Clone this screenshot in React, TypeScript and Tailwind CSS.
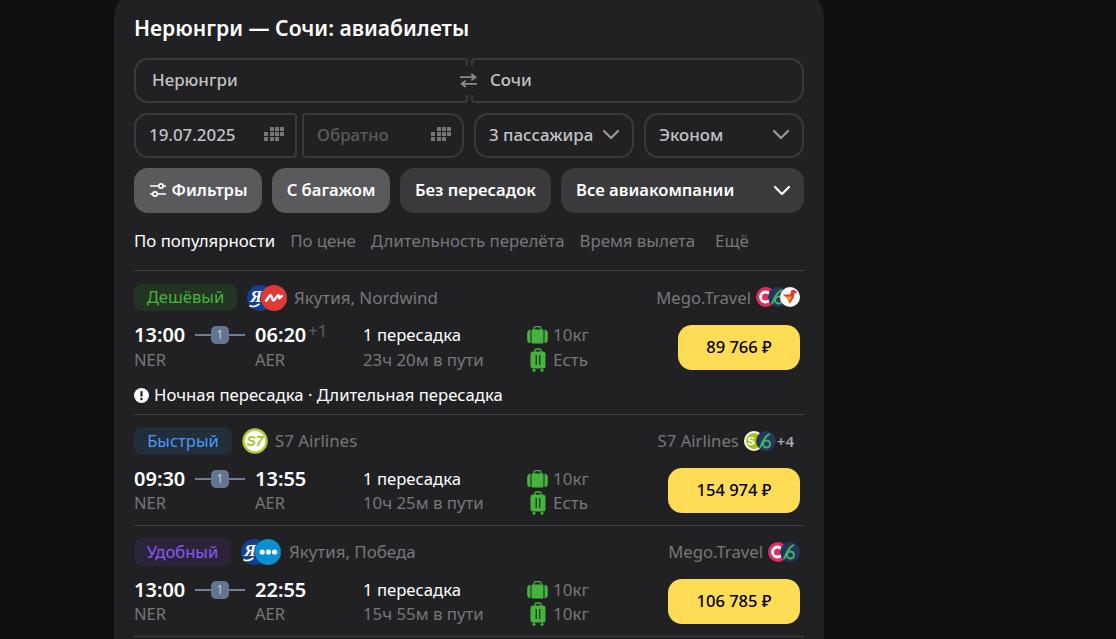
import React from "react";

const font = { fontFamily: '"Noto Sans", Roboto, sans-serif' };

function CalendarIcon() {
  const cells = [
    [6, 0], [11, 0], [16, 0],
    [0, 5], [6, 5], [11, 5], [16, 5],
    [0, 10], [6, 10], [11, 10],
  ];
  return (
    <svg width="20" height="15" viewBox="0 0 20 15" className="shrink-0" fill="#77777a">
      {cells.map(([x, y]) => (
        <rect key={`${x}-${y}`} x={x} y={y} width="4" height="4" rx="0.5" />
      ))}
    </svg>
  );
}

function Chevron({ color = "#9a9a9d" }: { color?: string }) {
  return (
    <svg width="18" height="11" viewBox="0 0 18 11" fill="none" className="shrink-0">
      <path d="M2 2l7 7 7-7" stroke={color} strokeWidth="2.2" strokeLinecap="round" strokeLinejoin="round" />
    </svg>
  );
}

function SwapIcon() {
  return (
    <svg width="17" height="15" viewBox="0 0 17 15" fill="none" stroke="#8b8b8e" strokeWidth="1.8">
      <path d="M0 4.2h15M11.2 1L15.4 4.2 11.2 7.4" />
      <path d="M17 10.8H2M5.8 7.6L1.6 10.8 5.8 14" />
    </svg>
  );
}

function SlidersIcon() {
  return (
    <svg width="18" height="16" viewBox="0 0 18 16" fill="none" stroke="#fff" strokeWidth="1.7" className="shrink-0">
      <path d="M1 4h9M14 4h3M1 12h3M8 12h9" />
      <circle cx="12" cy="4" r="2.2" />
      <circle cx="6" cy="12" r="2.2" />
    </svg>
  );
}

function BagIcon() {
  return (
    <svg width="21" height="18" viewBox="0 0 21 18" className="shrink-0">
      <path d="M7 4V2.5C7 1.4 7.9.7 9 .7h3c1.1 0 2 .7 2 1.8V4" fill="none" stroke="#46b33f" strokeWidth="1.3" />
      <rect x="4.5" y="3.5" width="12" height="14" rx="1" fill="#46b33f" />
      <path d="M3.5 3.7v13.6C1.5 17.2.2 16 .2 14V7C.2 5 1.5 3.8 3.5 3.7zM17.5 3.7v13.6c2-.1 3.3-1.3 3.3-3.3V7c0-2-1.3-3.2-3.3-3.3z" fill="#46b33f" />
    </svg>
  );
}

function CarryIcon() {
  return (
    <svg width="16" height="24" viewBox="0 0 16 24" className="shrink-0">
      <path d="M5 4V2.2C5 1.4 5.6 1 6.3 1h3.4c.7 0 1.3.4 1.3 1.2V4" fill="none" stroke="#46b33f" strokeWidth="1.3" />
      <rect x="0.5" y="3.5" width="15" height="17" rx="2.5" fill="#46b33f" />
      <path d="M6.2 7v10M9.8 7v10" stroke="#1f2a1d" strokeWidth="1.2" />
      <circle cx="4" cy="22.3" r="1.5" fill="#46b33f" />
      <circle cx="12" cy="22.3" r="1.5" fill="#46b33f" />
    </svg>
  );
}

function LogoCircle({ className = "", children, bg }: { className?: string; children?: React.ReactNode; bg: string }) {
  return (
    <svg width="26" height="26" viewBox="0 0 26 26" className={className}>
      <circle cx="13" cy="13" r="13" fill={bg} />
      {children}
    </svg>
  );
}

function YakutiaLogo() {
  return (
    <LogoCircle bg="#16408f">
      <text x="9" y="17" fill="#fff" fontSize="17" fontStyle="italic" fontWeight="700" textAnchor="middle" fontFamily="Liberation Serif, serif">Я</text>
      <path d="M2.5 20.5c3 2 7 .6 10-1.5" stroke="#fff" strokeWidth="1.6" fill="none" />
    </LogoCircle>
  );
}

function NordwindLogo() {
  return (
    <LogoCircle bg="#e03a37" className="-ml-[12px]">
      <path d="M4.5 16.5L8.5 11c1-1.2 1.6-.8 2 .4l1 3c.4 1.2 1.2 1.4 2 .4l3-4c.6-.8 1.2-.6 1.4.4l.4 2.2 3.2-3" stroke="#fff" strokeWidth="2.4" fill="none" strokeLinejoin="round" />
    </LogoCircle>
  );
}

function PobedaLogo() {
  return (
    <LogoCircle bg="#0a8fd0" className="-ml-[12px]">
      <circle cx="7.2" cy="13" r="2.6" fill="#fff" />
      <circle cx="13.4" cy="13" r="2.6" fill="#fff" />
      <circle cx="19.6" cy="13" r="2.6" fill="#fff" />
    </LogoCircle>
  );
}

function S7Logo() {
  return (
    <svg width="26" height="26" viewBox="0 0 26 26">
      <circle cx="13" cy="13" r="11.5" fill="#fff" stroke="#b5cc3a" strokeWidth="2.4" />
      <text x="13" y="18" fill="#a8c22c" fontSize="14" fontWeight="700" fontStyle="italic" textAnchor="middle" fontFamily="Liberation Sans, sans-serif">S7</text>
    </svg>
  );
}

function SmallLogo({ kind, first }: { kind: "mego" | "six" | "bird" | "s7"; first?: boolean }) {
  const cls = first ? "" : "-ml-[8px]";
  if (kind === "mego")
    return (
      <svg width="20" height="20" viewBox="0 0 20 20" className={cls}>
        <circle cx="10" cy="10" r="10" fill="#e22d64" />
        <circle cx="9.5" cy="10" r="5" fill="none" stroke="#fff" strokeWidth="2.8" />
      </svg>
    );
  if (kind === "six")
    return (
      <svg width="20" height="20" viewBox="0 0 20 20" className={cls}>
        <circle cx="10" cy="10" r="10" fill="#25365a" />
        <path d="M4 17C7 9 10 4 14 3M7 13a3.5 3.5 0 1 0 7 0 3.5 3.5 0 1 0-7 0" fill="none" stroke="#3fb36a" strokeWidth="2" />
      </svg>
    );
  if (kind === "bird")
    return (
      <svg width="20" height="20" viewBox="0 0 20 20" className={cls}>
        <circle cx="10" cy="10" r="10" fill="#fff" />
        <path d="M2.5 7.5h7.5L11.5 3h3l3 2.5-3 1-1 4.5-4 6-1-5z" fill="#e5352e" />
        <path d="M5.5 9.5h6.5l-3 6z" fill="#f2a01e" />
      </svg>
    );
  return (
    <svg width="20" height="20" viewBox="0 0 20 20" className={cls}>
      <circle cx="10" cy="10" r="9" fill="#a8c414" stroke="#fff" strokeWidth="2" />
      <text x="3.5" y="14" fill="#fff" fontSize="11" fontWeight="700" fontFamily="Liberation Sans, sans-serif">S</text>
    </svg>
  );
}

function Field({ children, className = "" }: { children: React.ReactNode; className?: string }) {
  return (
    <div className={`h-[45px] pb-[2px] border-2 border-[#3a3a3c] flex items-center text-[16.9px] font-medium ${className}`}>
      {children}
    </div>
  );
}

function Chip({ children, className = "" }: { children: React.ReactNode; className?: string }) {
  return (
    <div className={`h-[45px] pb-[1px] rounded-[14px] flex items-center text-[16.6px] font-semibold text-white ${className}`}>
      {children}
    </div>
  );
}

type Ticket = {
  badge: string;
  badgeClass: string;
  logos: React.ReactNode;
  logosClass: string;
  airline: string;
  seller: string;
  sellerLogos: React.ReactNode;
  sellerClass: string;
  dep: string;
  arr: string;
  plus?: string;
  duration: string;
  carry: string;
  price: string;
  priceWidth: string;
  warning?: boolean;
  topClass: string;
  bottomClass: string;
  codeClass: string;
};

const tickets: Ticket[] = [
  {
    badge: "Дешёвый",
    badgeClass: "h-[27px] w-[103px] bg-[#233423] text-[#46b33f]",
    logos: (<><YakutiaLogo /><NordwindLogo /></>),
    logosClass: "ml-[10px] mr-[7px]",
    airline: "Якутия, Nordwind",
    seller: "Mego.Travel",
    sellerLogos: (<><SmallLogo kind="mego" first /><SmallLogo kind="six" /><SmallLogo kind="bird" /></>),
    sellerClass: "pr-1",
    dep: "13:00",
    arr: "06:20",
    plus: "+1",
    duration: "23ч 20м в пути",
    carry: "Есть",
    price: "89 766 ₽",
    priceWidth: "w-[122px]",
    warning: true,
    topClass: "pt-[13px]",
    bottomClass: "pb-[7px]",
    codeClass: "h-[25px] leading-[25px]",
  },
  {
    badge: "Быстрый",
    badgeClass: "h-[28px] w-[98px] bg-[#222e3c] text-[#4a9bf5]",
    logos: <S7Logo />,
    logosClass: "ml-[10px] mr-[7px]",
    airline: "S7 Airlines",
    seller: "S7 Airlines",
    sellerLogos: (<><SmallLogo kind="s7" first /><SmallLogo kind="six" /><span className="ml-[1px] text-[15px] font-semibold text-[#a9a9ac]">+4</span></>),
    sellerClass: "pr-[10px]",
    dep: "09:30",
    arr: "13:55",
    duration: "10ч 25м в пути",
    carry: "Есть",
    price: "154 974 ₽",
    priceWidth: "w-[132px] mb-[1px]",
    topClass: "pt-[12px]",
    bottomClass: "pb-[10px]",
    codeClass: "h-[24px] leading-[24px]",
  },
  {
    badge: "Удобный",
    badgeClass: "h-[28px] w-[97px] bg-[#2b2339] text-[#8b57f5]",
    logos: (<><YakutiaLogo /><PobedaLogo /></>),
    logosClass: "ml-[10px] mr-[8px]",
    airline: "Якутия, Победа",
    seller: "Mego.Travel",
    sellerLogos: (<><SmallLogo kind="mego" first /><SmallLogo kind="six" /></>),
    sellerClass: "pr-1",
    dep: "13:00",
    arr: "22:55",
    duration: "15ч 55м в пути",
    carry: "10кг",
    price: "106 785 ₽",
    priceWidth: "w-[132px] mb-[1px]",
    topClass: "pt-[12px]",
    bottomClass: "pb-[10px]",
    codeClass: "h-[24px] leading-[24px]",
  },
];

function TicketRow({ t }: { t: Ticket }) {
  return (
    <div className={`border-t border-[#3e3e40] ${t.topClass} ${t.bottomClass}`}>
      <div className="flex items-center justify-between">
        <div className="flex items-center">
          <div className={`rounded-[8px] flex items-center justify-center text-[16.6px] ${t.badgeClass}`}>{t.badge}</div>
          <div className={`flex items-center ${t.logosClass}`}>{t.logos}</div>
          <span className="text-[16.9px] text-[#77777a]">{t.airline}</span>
        </div>
        <div className={`flex items-center ${t.sellerClass}`}>
          <span className="text-[16.7px] text-[#77777a] mr-[5px]">{t.seller}</span>
          {t.sellerLogos}
        </div>
      </div>
      <div className="mt-[12px] flex items-center justify-between pr-1">
        <div className="flex">
          <div className="w-[61px]">
            <div className="h-[24px] leading-[24px] text-[20px] font-semibold text-white">{t.dep}</div>
            <div className={`${t.codeClass} text-[16.5px] text-[#77777a]`}>NER</div>
          </div>
          <div className="w-[50px] h-[24px] relative flex items-center">
            <div className="w-full h-[2px] bg-[#6f7f9b]" />
            <div className="absolute left-[16px] top-[3px] w-[18px] h-[18px] rounded-[5px] bg-[#64748f] text-[#c0cce0] text-[12px] flex items-center justify-center">1</div>
          </div>
          <div className="w-[108px] ml-[10px]">
            <div className="h-[24px] leading-[24px] text-[20px] font-semibold text-white relative">
              {t.arr}
              {t.plus && <span className="absolute left-[53px] -top-[4px] text-[17px] font-normal text-[#5f5f62]">{t.plus}</span>}
            </div>
            <div className={`${t.codeClass} text-[16.5px] text-[#77777a]`}>AER</div>
          </div>
          <div className="w-[164px]">
            <div className="h-[24px] leading-[24px] text-[16.7px] font-normal text-white">1 пересадка</div>
            <div className={`${t.codeClass} text-[16.8px] text-[#77777a]`}>{t.duration}</div>
          </div>
          <div>
            <div className="h-[24px] flex items-center">
              <div className="w-[26px]"><BagIcon /></div>
              <span className="text-[17px] text-[#77777a]">10кг</span>
            </div>
            <div className={`${t.codeClass} flex items-center`}>
              <div className="w-[26px] pl-[3px]"><CarryIcon /></div>
              <span className="text-[17px] text-[#77777a]">{t.carry}</span>
            </div>
          </div>
        </div>
        <div className={`h-[45px] pb-[1px] ${t.priceWidth} rounded-[14px] bg-[#ffdc56] flex items-center justify-center text-[16.5px] font-medium text-black`}>{t.price}</div>
      </div>
      {t.warning && (
        <div className="mt-[11px] h-[24px] flex items-center text-[16.7px] font-normal text-white">
          <svg width="15" height="15" viewBox="0 0 15 15" className="mr-[5px] shrink-0">
            <circle cx="7.5" cy="7.5" r="7.5" fill="#fff" />
            <rect x="6.4" y="3" width="2.2" height="5.8" rx="1" fill="#212123" />
            <circle cx="7.5" cy="11" r="1.3" fill="#212123" />
          </svg>
          Ночная пересадка · Длительная пересадка
        </div>
      )}
    </div>
  );
}

export default function App() {
  return (
    <div className="h-[639px] overflow-hidden bg-[#0f0f0f]" style={font}>
      <div className="relative -top-[8px] ml-[114px] w-[710px] h-[700px] pt-[8px] px-5 rounded-[24px] bg-[#212123]">
        <h1 className="pt-[15px] h-[58px] text-[21.1px] leading-[26px] font-semibold text-white">Нерюнгри — Сочи: авиабилеты</h1>
        <div className="relative flex gap-[3px]">
          <Field className="w-[334px] pl-[16px] rounded-l-[14px] rounded-r-[4px] text-[#c3c3c5]">Нерюнгри</Field>
          <Field className="w-[333px] pl-[17px] rounded-r-[14px] rounded-l-[4px] text-[#c3c3c5]">Сочи</Field>
          <div className="absolute left-[323px] top-[8px] w-[22px] h-[29px] bg-[#212123] flex items-center justify-center"><SwapIcon /></div>
        </div>
        <div className="mt-[10px] flex">
          <Field className="w-[163px] pl-[13px] pr-[11px] justify-between rounded-l-[14px] rounded-r-[4px] text-[#c3c3c5]">19.07.2025<CalendarIcon /></Field>
          <Field className="w-[162px] ml-[5px] pl-[13px] pr-[11px] justify-between rounded-r-[14px] rounded-l-[4px] text-[#5a5a5d]">Обратно<CalendarIcon /></Field>
          <Field className="w-[160px] ml-[10px] pl-[13px] pr-[12px] justify-between rounded-[14px] text-[#c3c3c5]">3 пассажира<Chevron /></Field>
          <Field className="w-[160px] ml-[10px] pl-[13px] pr-[12px] justify-between rounded-[14px] text-[#c3c3c5]">Эконом<Chevron /></Field>
        </div>
        <div className="mt-[10px] flex gap-[10px]">
          <Chip className="w-[128px] justify-center gap-[5px] bg-[#5a5a5c]"><SlidersIcon />Фильтры</Chip>
          <Chip className="w-[118px] justify-center bg-[#5a5a5c]">С багажом</Chip>
          <Chip className="w-[151px] justify-center bg-[#3a3a3c]">Без пересадок</Chip>
          <Chip className="w-[243px] pl-[15px] pr-[13px] justify-between bg-[#3a3a3c]">Все авиакомпании<Chevron color="#fff" /></Chip>
        </div>
        <div className="mt-[16px] h-[24px] flex items-center text-[16.8px] text-[#77777a] mb-[17px]">
          <span className="text-white mr-[15px]">По популярности</span>
          <span className="mr-[15px]">По цене</span>
          <span className="mr-[15px]">Длительность перелёта</span>
          <span className="mr-[20px]">Время вылета</span>
          <span>Ещё</span>
        </div>
        {tickets.map((t) => (
          <TicketRow key={t.dep + t.arr} t={t} />
        ))}
        <div className="border-t border-[#3e3e40]" />
      </div>
    </div>
  );
}
